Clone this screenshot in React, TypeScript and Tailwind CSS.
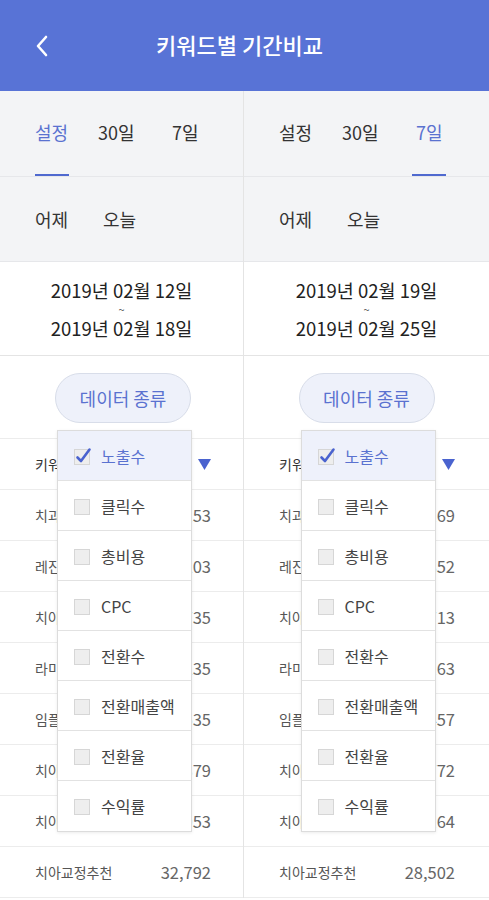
import React from "react";

const FONT = { fontFamily: '"Noto Sans CJK KR", "Noto Sans", sans-serif' };

type ColProps = {
  active: number;
  from: string;
  to: string;
  rows: [string, string][];
  left: boolean;
};

const tabs = ["설정", "30일", "7일"];
const options = ["노출수", "클릭수", "총비용", "CPC", "전환수", "전환매출액", "전환율", "수익률"];

function CheckBox({ checked }: { checked: boolean }) {
  return (
    <svg width="20" height="20" viewBox="0 0 20 20" className="shrink-0">
      <rect x="1.5" y="3.5" width="15" height="15" fill="#eeeeee" stroke="#d6d6d6" strokeWidth="1" />
      {checked && (
        <path d="M4.5 11.5 L8 15 L16.5 3.5" fill="none" stroke="#4a63cf" strokeWidth="2.6" strokeLinecap="round" strokeLinejoin="round" />
      )}
    </svg>
  );
}

function Column({ active, from, to, rows, left }: ColProps) {
  const slots = ["w-[63px]", "w-[74px]", "w-[60px]"];
  const rowPad = left ? "pr-[32px]" : "pr-[34px]";
  return (
    <div className="flex flex-col">
      <div className="bg-[#f3f4f6]">
        <div className="h-[86px] flex items-stretch pl-[35px] border-b border-[#e6e7ea]">
          {tabs.map((t, i) => (
            <div key={t} className={`${slots[i]} flex items-stretch`}>
              <div className="relative flex items-center pb-[2px]">
                <span className={`text-[18px] whitespace-nowrap ${i === active ? "text-[#5a72d0]" : "text-[#333]"}`}>{t}</span>
                {i === active && (
                  <div className="absolute bottom-0 left-1/2 -translate-x-1/2 w-[34px] h-[2px] bg-[#4f69cf]" />
                )}
              </div>
            </div>
          ))}
        </div>
        <div className="h-[85px] flex items-center pl-[35px] border-b border-[#e6e7ea] text-[18px] text-[#333]">
          <span className="w-[68px]">어제</span>
          <span>오늘</span>
        </div>
      </div>
      <div className="h-[94px] flex flex-col items-center justify-center border-b border-[#e4e4e4] text-[18.5px] text-[#222]">
        <span className="leading-[20px]">{from}</span>
        <span className="text-[11px] leading-[18px] text-[#555]">~</span>
        <span className="leading-[20px]">{to}</span>
      </div>
      <div className={`h-[82px] flex justify-center pt-[17px] ${left ? "pl-[3px]" : ""}`}>
        <div className="relative h-[50px]">
          <div className="w-[136px] h-[50px] rounded-full border border-[#d8dde9] bg-[#eef1fa] flex items-center justify-center text-[18px] text-[#5a72d0]">
            데이터 종류
          </div>
          <div className="absolute z-10 top-[57px] left-[2px] w-[135px] bg-white border border-[#dcdcdc] shadow-[0_1px_3px_rgba(0,0,0,0.08)]">
            {options.map((o, i) => (
              <div
                key={o}
                className={`h-[50px] flex items-center pl-[15px] gap-[8px] text-[16px] ${i < options.length - 1 ? "border-b border-[#e2e2e2]" : ""} ${i === 0 ? "bg-[#eef1fb] text-[#5a72d0]" : "text-[#444]"}`}
              >
                <CheckBox checked={i === 0} />
                <span className="whitespace-nowrap">{o}</span>
              </div>
            ))}
          </div>
        </div>
      </div>
      <div className="border-t border-[#ececec]">
        <div className={`h-[51px] flex items-center justify-between pl-[35px] ${rowPad} border-b border-[#ececec] text-[14px] text-[#333]`}>
          <span>키워드</span>
          <svg width="13" height="11" viewBox="0 0 13 11"><path d="M0 0 H13 L6.5 11 Z" fill="#4a63cf" /></svg>
        </div>
        {rows.map(([k, v], i) => (
          <div key={i} className={`h-[51px] flex items-center justify-between pl-[35px] ${rowPad} border-b border-[#ececec] text-[14px] text-[#555]`}>
            <span>{k}</span>
            <span className="text-[16.5px] text-[#666]">{v}</span>
          </div>
        ))}
      </div>
    </div>
  );
}

export default function App() {
  const leftRows: [string, string][] = [
    ["치과추천", "48,153"],
    ["레진치료", "45,203"],
    ["치아미백", "41,735"],
    ["라미네이트", "39,235"],
    ["임플란트", "37,535"],
    ["치아교정", "35,379"],
    ["치아성형", "33,953"],
    ["치아교정추천", "32,792"],
  ];
  const rightRows: [string, string][] = [
    ["치과추천", "44,169"],
    ["레진치료", "41,852"],
    ["치아미백", "38,713"],
    ["라미네이트", "36,163"],
    ["임플란트", "34,457"],
    ["치아교정", "31,772"],
    ["치아성형", "29,164"],
    ["치아교정추천", "28,502"],
  ];
  return (
    <div className="w-[489px] h-[900px] overflow-hidden bg-white" style={FONT}>
      <div className="h-[91px] bg-[#5873d6] grid grid-cols-[80px_1fr_80px] items-center">
        <div className="flex justify-center pl-[4px]">
          <svg width="14" height="24" viewBox="0 0 14 24">
            <path d="M11 3 L3 12 L11 21" fill="none" stroke="#fff" strokeWidth="2.6" strokeLinecap="round" strokeLinejoin="round" />
          </svg>
        </div>
        <div className="text-center text-white text-[22px] font-medium pb-[2px] pr-[10px]">키워드별 기간비교</div>
        <div />
      </div>
      <div className="grid grid-cols-[243px_1px_245px]">
        <Column left active={0} from="2019년 02월 12일" to="2019년 02월 18일" rows={leftRows} />
        <div className="bg-[#e4e4e4]" />
        <Column left={false} active={2} from="2019년 02월 19일" to="2019년 02월 25일" rows={rightRows} />
      </div>
    </div>
  );
}
